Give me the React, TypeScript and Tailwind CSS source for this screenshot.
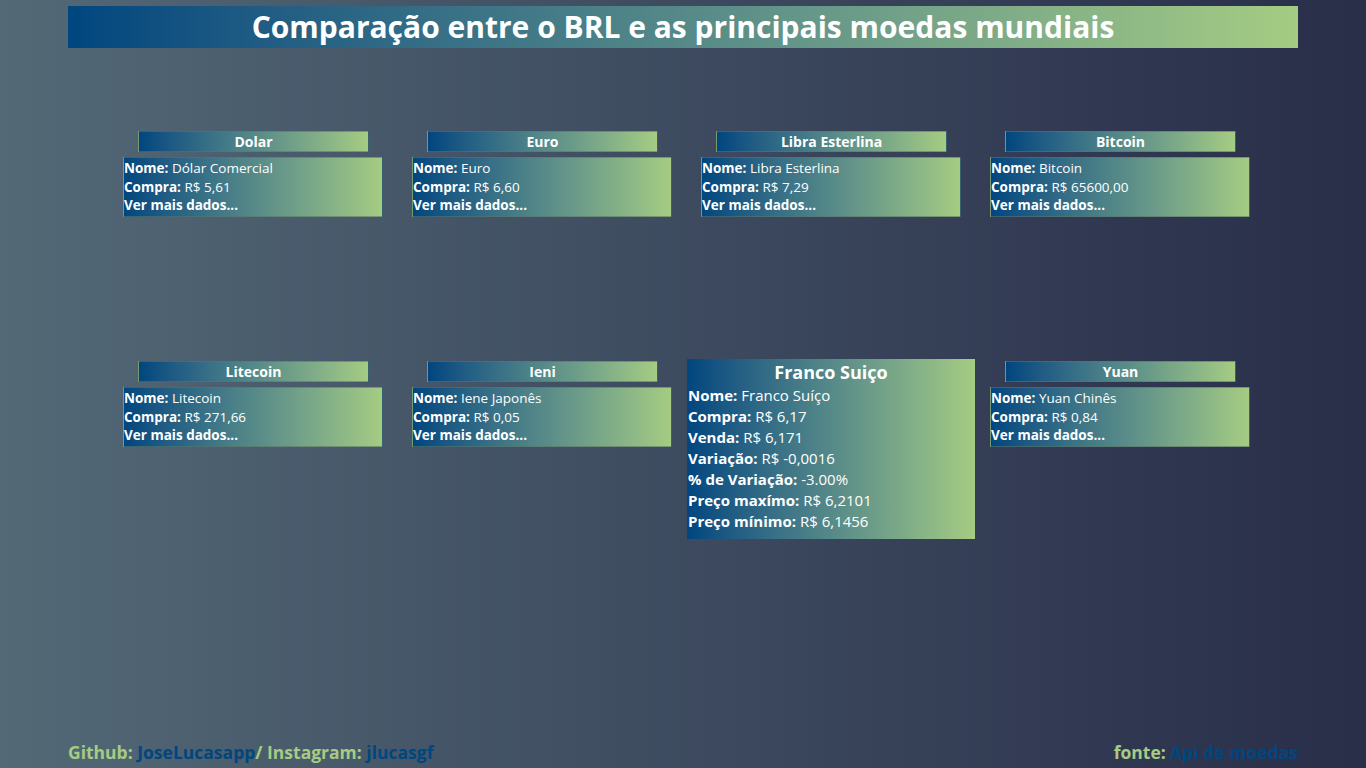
const font = { fontFamily: '"Open Sans", "Noto Sans", sans-serif' };

type Moeda = {
  titulo: string;
  nome: string;
  compra: string;
};

const moedas: Moeda[] = [
  { titulo: "Dolar", nome: "Dólar Comercial", compra: "R$ 5,61" },
  { titulo: "Euro", nome: "Euro", compra: "R$ 6,60" },
  { titulo: "Libra Esterlina", nome: "Libra Esterlina", compra: "R$ 7,29" },
  { titulo: "Bitcoin", nome: "Bitcoin", compra: "R$ 65600,00" },
  { titulo: "Litecoin", nome: "Litecoin", compra: "R$ 271,66" },
  { titulo: "Ieni", nome: "Iene Japonês", compra: "R$ 0,05" },
  { titulo: "Franco Suiço", nome: "Franco Suíço", compra: "R$ 6,17" },
  { titulo: "Yuan", nome: "Yuan Chinês", compra: "R$ 0,84" },
];

const detalhes = [
  ["Nome:", "Franco Suíço"],
  ["Compra:", "R$ 6,17"],
  ["Venda:", "R$ 6,171"],
  ["Variação:", "R$ -0,0016"],
  ["% de Variação:", "-3.00%"],
  ["Preço maxímo:", "R$ 6,2101"],
  ["Preço mínimo:", "R$ 6,1456"],
];

const gradient = "bg-gradient-to-r from-[#00467f] to-[#a5cc82]";

const MoedaCard = ({ moeda }: { moeda: Moeda }) => {
  return (
    <div className="flex flex-col">
      <div
        className={`${gradient} ml-[15px] mr-[14px] h-[21px] border border-[#5d7566]/60 text-center text-[14px] font-bold leading-[19px] text-white`}
      >
        {moeda.titulo}
      </div>
      <div
        className={`${gradient} mt-[5px] h-[60px] border border-[#5d7566]/60 pt-px text-[13.5px] leading-[18.5px] text-white`}
      >
        <p>
          <b>Nome:</b> {moeda.nome}
        </p>
        <p>
          <b>Compra:</b> {moeda.compra}
        </p>
        <p className="font-bold">Ver mais dados...</p>
      </div>
    </div>
  );
};

const CardAberto = () => {
  return (
    <div className="flex justify-center">
      <div
        className={`${gradient} -mt-[2px] h-[180px] w-[288px] shrink-0 px-px text-[15px] leading-[21px] text-white`}
      >
        <p className="pt-px text-center text-[18px] font-bold leading-[25px]">Franco Suiço</p>
        {detalhes.map(([label, valor]) => (
          <p key={label}>
            <b>{label}</b> {valor}
          </p>
        ))}
      </div>
    </div>
  );
};

export default function App() {
  return (
    <div
      style={font}
      className="flex h-[768px] w-full flex-col overflow-hidden bg-gradient-to-r from-[#536976] to-[#292e49]"
    >
      <h1
        className={`${gradient} mx-[68px] mt-[6px] h-[42px] text-center text-[30px] font-bold leading-[42px] text-white`}
      >
        Comparação entre o BRL e as principais moedas mundiais
      </h1>

      <div className="ml-[123px] mt-[83px] grid w-[1127px] grid-cols-4 gap-x-[29px]">
        {moedas.map((moeda) => (
          <div key={moeda.titulo} className="h-[230px]">
            {moeda.titulo === "Franco Suiço" ? <CardAberto /> : <MoedaCard moeda={moeda} />}
          </div>
        ))}
      </div>

      <footer className="mt-auto flex justify-between px-[68px] pb-[3px] text-[17.5px] font-bold text-[#a5cc82]">
        <p>
          Github: <span className="text-[#00467f]">JoseLucasapp</span>/ Instagram:{" "}
          <span className="text-[#00467f]">jlucasgf</span>
        </p>
        <p>
          fonte: <span className="text-[#00467f]">Api de moedas</span>
        </p>
      </footer>
    </div>
  );
}
